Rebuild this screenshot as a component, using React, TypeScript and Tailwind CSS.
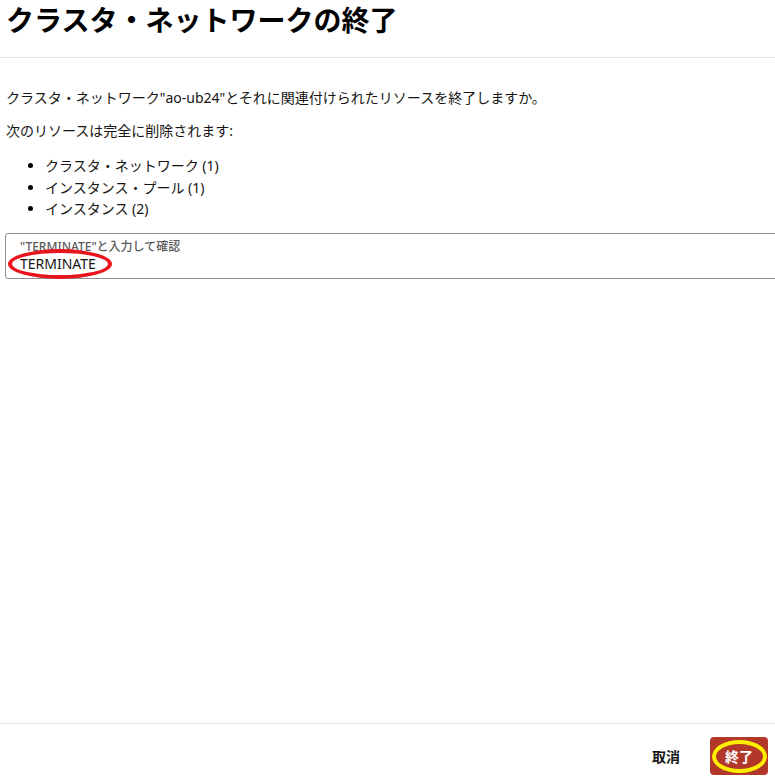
import React from "react";

const resources = [
  "クラスタ・ネットワーク (1)",
  "インスタンス・プール (1)",
  "インスタンス (2)",
];

export default function App() {
  return (
    <div className="flex h-[780px] w-[775px] flex-col overflow-hidden bg-white font-['Noto_Sans','Noto_Sans_CJK_JP',sans-serif] text-[#161513]">
      <header className="h-[58px] border-b border-[#e4e4e4] px-[6px] pt-[1px]">
        <h1 className="text-[28px] font-bold leading-[38px] text-black">
          クラスタ・ネットワークの終了
        </h1>
      </header>

      <main className="flex-1 pt-[29px]">
        <p className="px-[6px] text-[14px] leading-[22px]">
          クラスタ・ネットワーク"ao-ub24"とそれに関連付けられたリソースを終了しますか。
        </p>
        <p className="mt-[11px] px-[6px] text-[14px] leading-[22px]">
          次のリソースは完全に削除されます:
        </p>
        <ul className="mt-[13px] list-disc pl-[45px] text-[14px] leading-[21.5px] marker:text-black">
          {resources.map((r) => (
            <li key={r}>{r}</li>
          ))}
        </ul>

        <div className="relative -mr-[12px] ml-[5px] mt-[13px] h-[46px] rounded-[3px] border border-[#8e8e8e] px-[14px] pt-[5px]">
          <div className="text-[12px] font-medium leading-[15px] text-[#5b5b5b]">
            "TERMINATE"と入力して確認
          </div>
          <div className="text-[14px] leading-[20px] text-[#161513]">TERMINATE</div>
          <div className="pointer-events-none absolute left-[2px] top-[15px] h-[30px] w-[104px] rounded-[50%] border-4 border-[#e8161c]" />
        </div>
      </main>

      <footer className="flex h-[57px] items-center justify-end gap-[30px] border-t border-[#e4e4e4] pr-[7px] pt-[8px]">
        <button className="text-[14px] font-bold text-[#161513]">取消</button>
        <div className="relative">
          <button className="h-[38px] w-[58px] rounded-[4px] bg-[#b2382a] text-[14px] font-bold text-white">
            終了
          </button>
          <div className="pointer-events-none absolute left-[2px] top-[3px] h-[33px] w-[55px] rounded-[50%] border-4 border-[#ffee00]" />
        </div>
      </footer>
    </div>
  );
}
